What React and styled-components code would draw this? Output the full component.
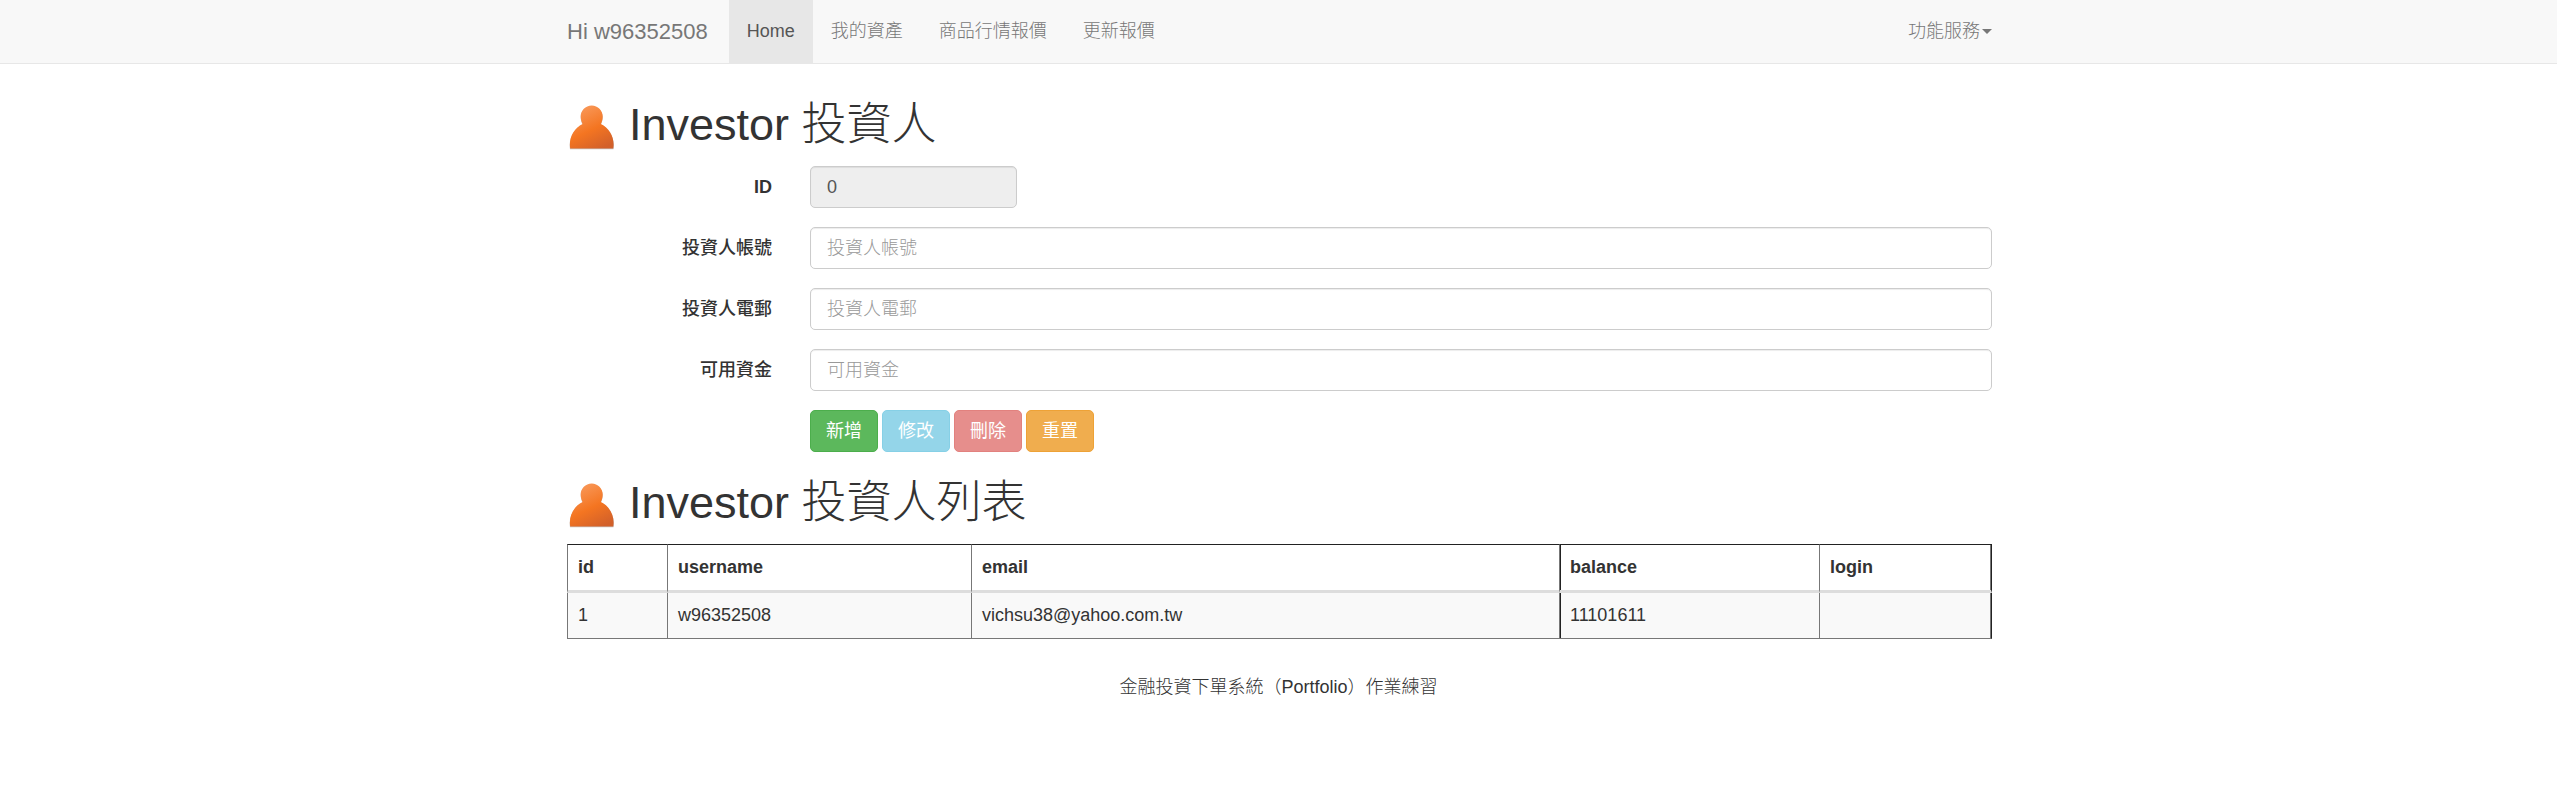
import React from "react";
import styled, { createGlobalStyle } from "styled-components";

const GlobalStyle = createGlobalStyle`
  *, *::before, *::after { box-sizing: border-box; }
  body {
    margin: 0;
    background: #fff;
    color: #333;
    font-family: "Liberation Sans", Arial, "Noto Sans CJK TC", sans-serif;
    font-size: 18px;
    font-weight: 300;
    line-height: 25px;
  }
`;

const Container = styled.div`
  width: 100%;
  max-width: 1461px;
  margin: 0 auto;
  padding: 0 17px 0 19px;
`;

const Navbar = styled.nav`
  background: #f8f8f8;
  border-bottom: 1px solid #e7e7e7;
`;

const NavInner = styled(Container)`
  display: flex;
  flex-wrap: wrap;
`;

const Brand = styled.a`
  padding: 19px 21px 19px 0;
  color: #777;
  font-size: 22px;
  text-decoration: none;
`;

const NavList = styled.ul`
  display: flex;
  flex-wrap: wrap;
  flex: 1;
  margin: 0;
  padding: 0;
  list-style: none;
`;

const NavLink = styled.a`
  display: block;
  padding: 19px 18px;
  color: ${(p) => (p.$active ? "#555" : "#777")};
  background: ${(p) => (p.$active ? "#e7e7e7" : "transparent")};
  text-decoration: none;
`;

const MenuButton = styled.button`
  display: flex;
  align-items: center;
  gap: 2px;
  padding: 0;
  border: 0;
  background: none;
  color: #777;
  font: inherit;
  cursor: pointer;
`;

const Caret = styled.span`
  border: 5px solid transparent;
  border-top-color: currentColor;
  border-bottom: 0;
`;

const Heading = styled.h1`
  display: flex;
  align-items: flex-end;
  gap: 12px;
  margin: 0;
  padding: ${(p) => (p.$compact ? "22px" : "32px")} 0 13px;
  font-size: 45px;
  font-weight: 300;
  line-height: 57px;
`;

const HeadingIcon = styled.svg`
  flex: none;
  width: 50px;
  height: 50px;
`;

const Form = styled.form`
  display: grid;
  gap: 19px;
`;

const FormRow = styled.div`
  display: grid;
  grid-template-columns: 205px 1fr;
  align-items: center;
  column-gap: 38px;
`;

const Label = styled.label`
  font-weight: ${(p) => (p.$latin ? 700 : 500)};
  text-align: right;
`;

const Input = styled.input`
  width: 100%;
  max-width: ${(p) => (p.$short ? "207px" : "none")};
  height: 42px;
  padding: 7px 16px;
  border: 1px solid #ccc;
  border-radius: 5px;
  background: ${(p) => (p.readOnly ? "#eee" : "#fff")};
  box-shadow: inset 0 1px 1px rgba(0, 0, 0, 0.075);
  color: #555;
  font: inherit;

  &::placeholder {
    color: #999;
    opacity: 1;
  }
`;

const Actions = styled.div`
  display: flex;
  flex-wrap: wrap;
  gap: 4px;
  grid-column: 2;
`;

const Button = styled.button`
  height: 42px;
  padding: 0 15px;
  border: 1px solid ${(p) => p.$border};
  border-radius: 5px;
  background: ${(p) => p.$fill};
  color: #fff;
  font: inherit;
  font-weight: 400;
  opacity: ${(p) => (p.disabled ? 0.65 : 1)};
`;

const Table = styled.table`
  width: 100%;
  table-layout: fixed;
  border-collapse: separate;
  border-spacing: 0;

  th, td {
    padding: 10px;
    border-left: 1px solid #777;
    text-align: left;
  }

  th:last-child, td:last-child {
    border-right: 1px solid #222;
    box-shadow: inset -1px 0 #777;
  }
`;

const Col = styled.col`
  width: ${(p) => p.$width};
`;

const HeaderCell = styled.th`
  border-top: 1px solid #222;
  border-bottom: 3px solid #ddd;
  box-shadow: ${(p) => (p.$strong ? "inset 1px 0 #222" : "none")};
  font-weight: 700;
`;

const Cell = styled.td`
  height: 46px;
  border-bottom: 1px solid #777;
  background: #f9f9f9;
  box-shadow: ${(p) => (p.$strong ? "inset 1px 0 #222" : "none")};
`;

const Footer = styled.footer`
  padding: 36px 0;
  text-align: center;
`;

function InvestorIcon({ id }) {
  return (
    <HeadingIcon viewBox="0 0 50 50" aria-hidden="true">
      <defs>
        <linearGradient id={id} x1="0.25" y1="0" x2="0.75" y2="1">
          <stop offset="0" stopColor="#f99a5c" />
          <stop offset="0.55" stopColor="#f47521" />
          <stop offset="1" stopColor="#d2602a" />
        </linearGradient>
      </defs>
      <path
        d="M24.700 3.200c6.200 0 11 5 11 11.100 0 3-1 5.600-1.800 7.400C41.500 25 46.800 33.500 46.800 42c0 1.500-.1 2.800-.3 4.300H3c-.3-1.500-.3-2.800-.3-4.300 0-8.500 5.200-17 12.900-20.300-.9-1.800-1.900-4.400-1.900-7.400 0-6.100 4.800-11.100 11-11.100z"
        fill="#c4bfbc"
      />
      <path
        d="M24.700 2.500c6.200 0 11 5 11 11.100 0 3-1 5.600-1.800 7.400C41.500 24.300 46.600 33 46.600 41.300c0 1.500-.1 2.600-.3 4.100H3.200c-.3-1.500-.3-2.600-.3-4.100 0-8.300 5.100-17 12.700-20.300-.9-1.800-1.900-4.400-1.900-7.400 0-6.100 4.800-11.100 11-11.100z"
        fill={`url(#${id})`}
      />
    </HeadingIcon>
  );
}

const fields = [
  { id: "username", label: "投資人帳號" },
  { id: "email", label: "投資人電郵" },
  { id: "balance", label: "可用資金" },
];

const actions = [
  { label: "新增", fill: "#5cb85c", border: "#4cae4c" },
  { label: "修改", fill: "#5bc0de", border: "#46b8da", disabled: true },
  { label: "刪除", fill: "#d9534f", border: "#d43f3a", disabled: true },
  { label: "重置", fill: "#f0ad4e", border: "#eea236" },
];

const columns = [
  { name: "id", width: "100px" },
  { name: "username", width: "304px" },
  { name: "email", width: "auto" },
  { name: "balance", width: "260px", strong: true },
  { name: "login", width: "173px" },
];

const investors = [
  { id: 1, username: "w96352508", email: "vichsu38@yahoo.com.tw", balance: 11101611, login: "" },
];

export default function App() {
  return (
    <>
      <GlobalStyle />
      <Navbar>
        <NavInner>
          <Brand href="#">Hi w96352508</Brand>
          <NavList>
            <li><NavLink href="#" $active>Home</NavLink></li>
            <li><NavLink href="#">我的資產</NavLink></li>
            <li><NavLink href="#">商品行情報價</NavLink></li>
            <li><NavLink href="#">更新報價</NavLink></li>
          </NavList>
          <MenuButton type="button">
            功能服務
            <Caret />
          </MenuButton>
        </NavInner>
      </Navbar>

      <Container as="main">
        <Heading>
          <InvestorIcon id="investor-form" />
          <span>Investor 投資人</span>
        </Heading>
        <Form onSubmit={(e) => e.preventDefault()}>
          <FormRow>
            <Label htmlFor="investor-id" $latin>ID</Label>
            <Input id="investor-id" $short readOnly value="0" />
          </FormRow>
          {fields.map((f) => (
            <FormRow key={f.id}>
              <Label htmlFor={f.id}>{f.label}</Label>
              <Input id={f.id} placeholder={f.label} />
            </FormRow>
          ))}
          <FormRow>
            <Actions>
              {actions.map((a) => (
                <Button key={a.label} type="button" $fill={a.fill} $border={a.border} disabled={a.disabled}>
                  {a.label}
                </Button>
              ))}
            </Actions>
          </FormRow>
        </Form>

        <Heading $compact>
          <InvestorIcon id="investor-list" />
          <span>Investor 投資人列表</span>
        </Heading>
        <Table>
          <colgroup>
            {columns.map((c) => <Col key={c.name} $width={c.width} />)}
          </colgroup>
          <thead>
            <tr>
              {columns.map((c) => (
                <HeaderCell key={c.name} scope="col" $strong={c.strong}>{c.name}</HeaderCell>
              ))}
            </tr>
          </thead>
          <tbody>
            {investors.map((row) => (
              <tr key={row.id}>
                {columns.map((c) => (
                  <Cell key={c.name} $strong={c.strong}>{row[c.name]}</Cell>
                ))}
              </tr>
            ))}
          </tbody>
        </Table>
      </Container>
      <Footer>金融投資下單系統（Portfolio）作業練習</Footer>
    </>
  );
}
